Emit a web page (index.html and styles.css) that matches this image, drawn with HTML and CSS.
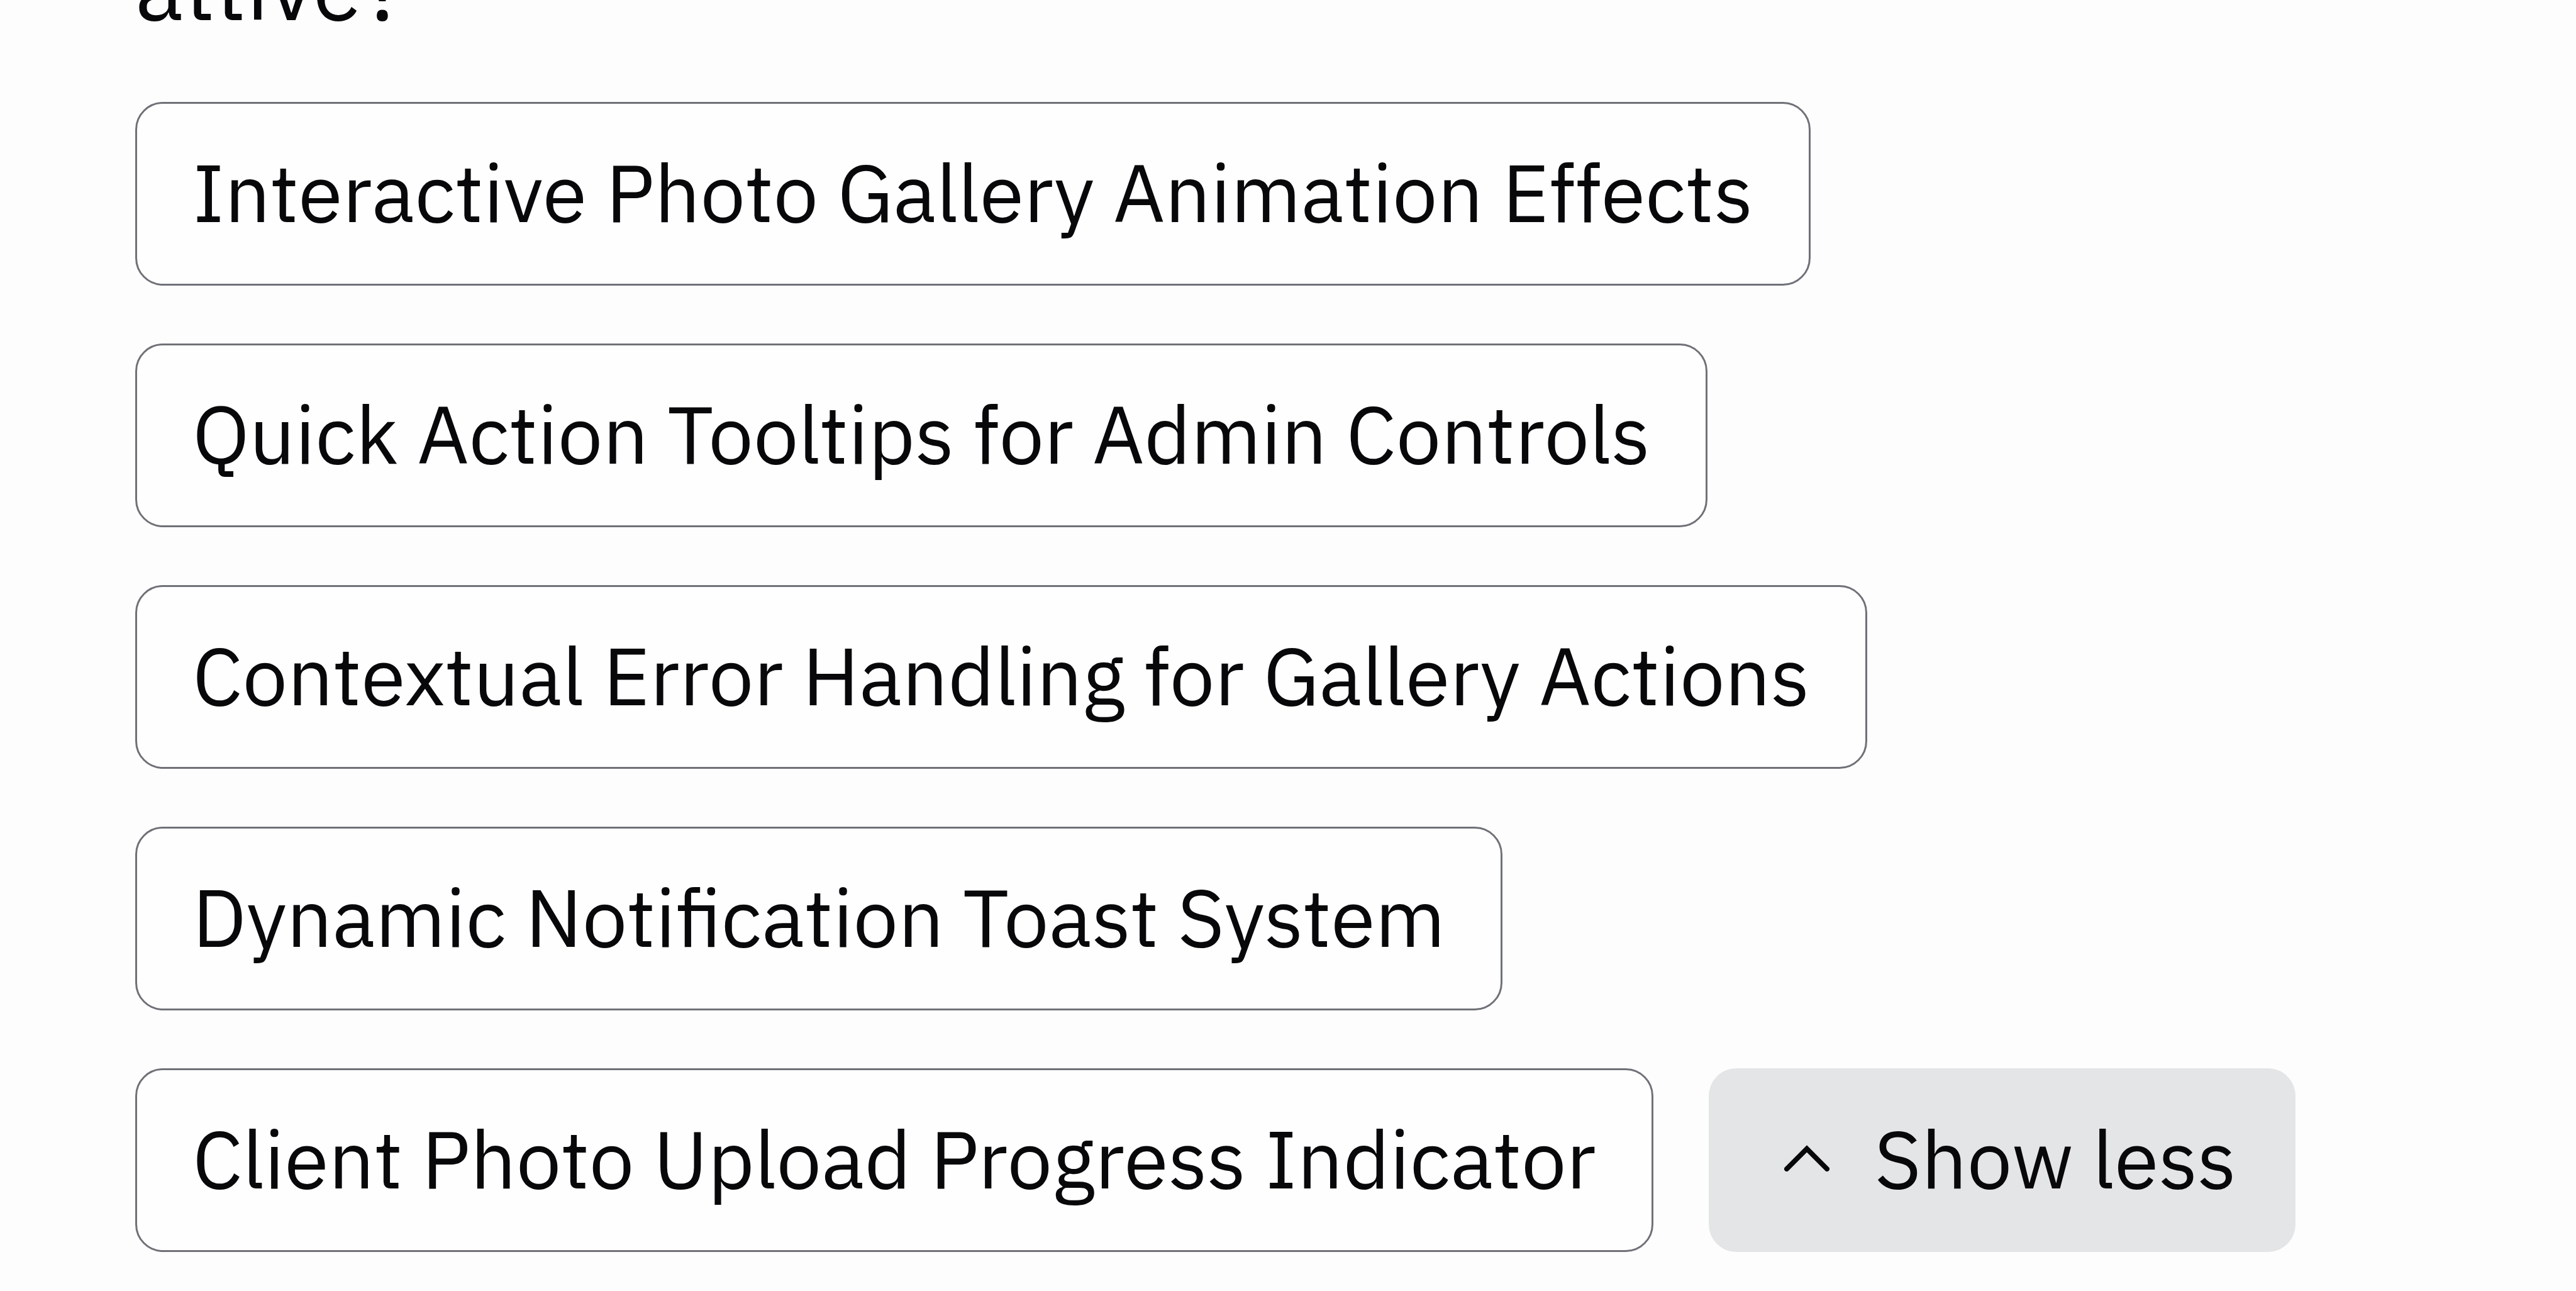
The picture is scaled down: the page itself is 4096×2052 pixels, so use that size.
FILE: index.html
```html
<!DOCTYPE html>
<html lang="en">
<head>
<meta charset="utf-8">
<title>Suggestions</title>
<link rel="stylesheet" href="styles.css">
</head>
<body>
<main class="panel">
<p class="question">attive?</p>
<div class="suggestions">
<button class="chip" type="button">Interactive Photo Gallery Animation Effects</button>
<button class="chip" type="button">Quick Action Tooltips for Admin Controls</button>
<button class="chip" type="button">Contextual Error Handling for Gallery Actions</button>
<button class="chip" type="button">Dynamic Notification Toast System</button>
<div class="row">
<button class="chip" type="button">Client Photo Upload Progress Indicator</button>
<button class="chip toggle" type="button"><svg class="chevron" viewBox="0 0 72 42" aria-hidden="true"><path d="M4 38 L36 6 L68 38"/></svg>Show less</button>
</div>
</div>
</main>
</body>
</html>
```
FILE: styles.css
```css
* { box-sizing: border-box; }
html, body { height: 100%; }
body {
  margin: 0;
  overflow: hidden;
  background: #fdfdfd;
  color: #08080a;
  font-family: "IBM Plex Sans", "Noto Sans", sans-serif;
  font-size: 128px;
  line-height: 160px;
}
.panel { padding: 0 215px; }
.question {
  margin: -114px 0 92px;
  font-size: 144px;
  line-height: 184px;
}
.suggestions { display: flex; flex-direction: column; align-items: flex-start; gap: 92px; }
.row { display: flex; gap: 88px; }
.chip {
  height: 292px;
  padding: 0 88px 6px;
  border: 3px solid #6f7177;
  border-radius: 44px;
  background: #fefefe;
  color: inherit;
  font: inherit;
  white-space: nowrap;
}
.toggle {
  display: flex;
  align-items: center;
  gap: 72px;
  padding: 0 94px 6px 120px;
  border: 0;
  background: #e4e5e7;
}
.chevron {
  width: 72px;
  height: 42px;
  fill: none;
  stroke: currentColor;
  stroke-width: 8;
  stroke-linecap: round;
}
```
